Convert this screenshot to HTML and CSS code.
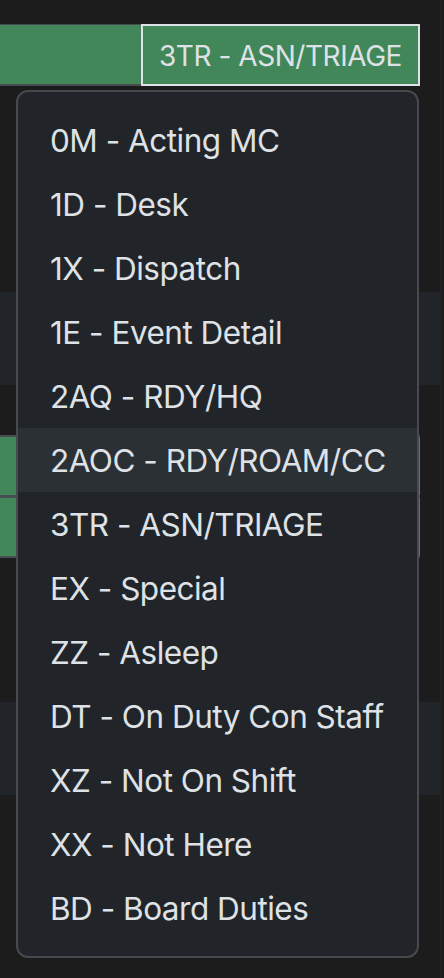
FILE: index.html
```html
<!DOCTYPE html>
<html lang="en">
<head>
<meta charset="utf-8">
<title>Status menu</title>
<link rel="stylesheet" href="styles.css">
</head>
<body>
<div class="page">
  <div class="content">
    <div class="gap g24"></div>
    <div class="status-row">
      <div class="status-cell"></div>
      <button class="status-btn">3TR - ASN/TRIAGE</button>
    </div>
    <div class="gap g206"></div>
    <div class="band"></div>
    <div class="gap g50"></div>
    <div class="green-rows">
      <div class="green-row"></div>
      <div class="green-row"></div>
    </div>
    <div class="gap g144"></div>
    <div class="band"></div>
  </div>
  <div class="edge"></div>

  <ul class="menu">
    <li class="item">0M - Acting MC</li>
    <li class="item">1D - Desk</li>
    <li class="item">1X - Dispatch</li>
    <li class="item">1E - Event Detail</li>
    <li class="item">2AQ - RDY/HQ</li>
    <li class="item hover">2AOC - RDY/ROAM/CC</li>
    <li class="item">3TR - ASN/TRIAGE</li>
    <li class="item">EX - Special</li>
    <li class="item">ZZ - Asleep</li>
    <li class="item">DT - On Duty Con Staff</li>
    <li class="item">XZ - Not On Shift</li>
    <li class="item">XX - Not Here</li>
    <li class="item">BD - Board Duties</li>
  </ul>
</div>
</body>
</html>
```
FILE: styles.css
```css
* { box-sizing: border-box; }
html, body {
  margin: 0;
  padding: 0;
  background: #1c1c1c;
  font-family: Inter, "Noto Sans", sans-serif;
}
.page {
  position: relative;
  display: flex;
  width: 444px;
  height: 978px;
  overflow: hidden;
}
.content {
  width: 440px;
  display: flex;
  flex-direction: column;
}
.edge {
  width: 4px;
  background: #1e1e1e;
  border-left: 1px solid #232323;
}
.gap { flex: none; }
.g24 { height: 24px; }
.g206 { height: 206px; }
.g50 { height: 50px; }
.g144 { height: 144px; }

.status-row {
  display: flex;
  width: 420px;
  height: 62px;
  flex: none;
}
.status-cell {
  flex: 1;
  background: #42875a;
  border-top: 1px solid #474b50;
  border-bottom: 2px solid #474b50;
}
.status-btn {
  flex: none;
  width: 279px;
  height: 62px;
  margin: 0;
  padding: 1px 0 0;
  background: #42875a;
  border: 2px solid #dfe2e5;
  color: #dee2e6;
  font-family: inherit;
  font-size: 28px;
  letter-spacing: -0.45px;
  line-height: 42px;
  text-align: center;
  white-space: nowrap;
}
.band {
  height: 93px;
  background: #212529;
  flex: none;
}
.green-rows {
  width: 420px;
  display: flex;
  flex-direction: column;
  border-top: 2px solid #4a4d52;
  flex: none;
}
.green-row {
  height: 61px;
  background: #42875a;
  border-bottom: 3px solid #4a4d52;
}
.green-row:last-child {
  height: 60px;
  border-bottom-width: 2px;
}

.menu {
  position: absolute;
  left: 16px;
  top: 90px;
  width: 403px;
  margin: 0;
  padding: 16px 0;
  list-style: none;
  background: #212529;
  border: 2px solid #46494d;
  border-radius: 12px;
}
.item {
  padding: 9px 32px 7px;
  font-size: 31.5px;
  letter-spacing: -0.5px;
  line-height: 48px;
  color: #dee2e6;
  white-space: nowrap;
}
.item.hover {
  background: #2b3035;
}
```
